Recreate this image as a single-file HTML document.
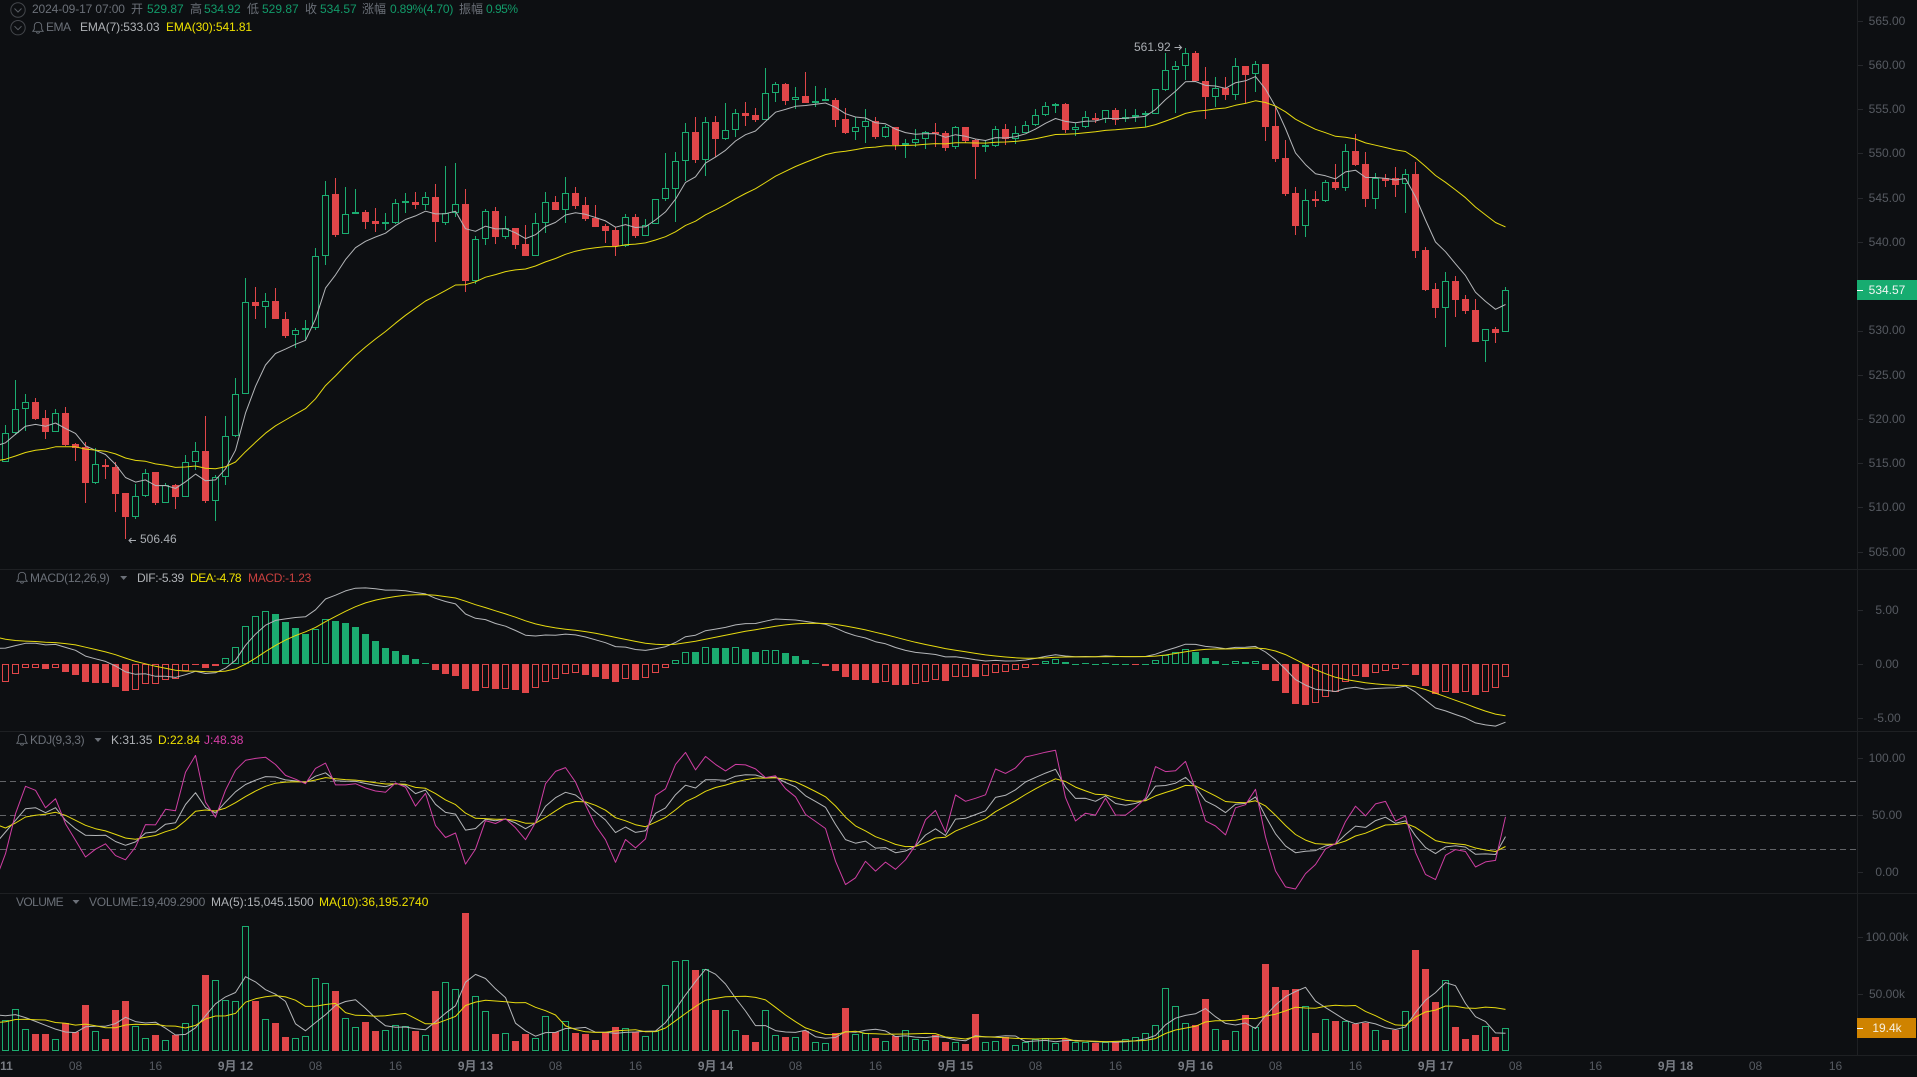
<!DOCTYPE html>
<html lang="zh"><head><meta charset="utf-8"><title>K-line chart</title>
<style>
html,body{margin:0;padding:0;background:#0d0f12;width:1917px;height:1077px;overflow:hidden}
body{position:relative;font:12px/14px "Liberation Sans","Noto Sans CJK SC",sans-serif;color:#6b7078}
svg{position:absolute;left:0;top:0}
span{position:absolute;white-space:nowrap}
.g{color:#129a69}.l{color:#6b7078}.w{color:#b0b3b7}.y{color:#eee000}.r{color:#c9403f}.p{color:#d63ea6}
.a{left:1857px;width:60px;text-align:center;color:#565a61}
.t{top:1059px;width:60px;margin-left:-30px;text-align:center;color:#565a61}
.b{font-weight:bold;color:#787c83}
</style></head><body>
<svg id="c" width="1917" height="1077" viewBox="0 0 1917 1077"></svg>

<span class="l" style="left:32px;top:2px;letter-spacing:-.12px">2024-09-17 07:00</span>
<span class="l" style="left:131px;top:2px">开</span><span class="g" style="left:147px;top:2px">529.87</span>
<span class="l" style="left:190px;top:2px">高</span><span class="g" style="left:204px;top:2px">534.92</span>
<span class="l" style="left:247px;top:2px">低</span><span class="g" style="left:262px;top:2px">529.87</span>
<span class="l" style="left:305px;top:2px">收</span><span class="g" style="left:320px;top:2px">534.57</span>
<span class="l" style="left:362px;top:2px">涨幅</span><span class="g" style="left:390px;top:2px;letter-spacing:-.2px">0.89%(4.70)</span>
<span class="l" style="left:459px;top:2px">振幅</span><span class="g" style="left:486px;top:2px;letter-spacing:-.5px">0.95%</span>

<span class="l" style="left:46px;top:20px;letter-spacing:-.5px">EMA</span>
<span class="w" style="left:80px;top:20px;letter-spacing:-.1px">EMA(7):533.03</span>
<span class="y" style="left:166px;top:20px;letter-spacing:-.1px">EMA(30):541.81</span>

<span class="l" style="left:30px;top:571px;letter-spacing:-.3px">MACD(12,26,9)</span>
<span class="w" style="left:137px;top:571px;letter-spacing:-.36px">DIF:-5.39</span>
<span class="y" style="left:190px;top:571px;letter-spacing:-.47px">DEA:-4.78</span>
<span class="r" style="left:248px;top:571px;letter-spacing:-.3px">MACD:-1.23</span>

<span class="l" style="left:30px;top:733px;letter-spacing:-.3px">KDJ(9,3,3)</span>
<span class="w" style="left:111px;top:733px">K:31.35</span>
<span class="y" style="left:158px;top:733px">D:22.84</span>
<span class="p" style="left:204px;top:733px">J:48.38</span>

<span class="l" style="left:16px;top:895px;letter-spacing:-.6px">VOLUME</span>
<span class="l" style="left:89px;top:895px;letter-spacing:-.26px">VOLUME:19,409.2900</span>
<span class="w" style="left:211px;top:895px">MA(5):15,045.1500</span>
<span class="y" style="left:319px;top:895px">MA(10):36,195.2740</span>

<span style="left:1134px;top:40px;color:#a9adb2">561.92</span>
<span style="left:140px;top:532px;color:#a9adb2">506.46</span>

<span class="a" style="top:14px">565.00</span><span class="a" style="top:58px">560.00</span><span class="a" style="top:102px">555.00</span><span class="a" style="top:146px">550.00</span><span class="a" style="top:191px">545.00</span><span class="a" style="top:235px">540.00</span><span class="a" style="top:323px">530.00</span><span class="a" style="top:368px">525.00</span><span class="a" style="top:412px">520.00</span><span class="a" style="top:456px">515.00</span><span class="a" style="top:500px">510.00</span><span class="a" style="top:545px">505.00</span>
<span class="a" style="top:603px">5.00</span><span class="a" style="top:657px">0.00</span><span class="a" style="top:711px">-5.00</span>
<span class="a" style="top:751px">100.00</span><span class="a" style="top:808px">50.00</span><span class="a" style="top:865px">0.00</span>
<span class="a" style="top:930px">100.00k</span><span class="a" style="top:987px">50.00k</span>

<div style="position:absolute;left:1857px;top:280px;width:60px;height:20px;background:#17ac70"></div>
<span class="a" style="top:283px;color:#f2f5f3">534.57</span>
<div style="position:absolute;left:1857px;top:1018px;width:59px;height:20px;background:#cf8300"></div>
<span class="a" style="top:1021px;color:#f6efe0">19.4k</span>
<div style="position:absolute;left:1857px;top:290px;width:6px;height:1px;background:#fff"></div>
<div style="position:absolute;left:1857px;top:1028px;width:6px;height:1px;background:#fff"></div>

<span class="t b" style="left:-4.5px">9月 11</span><span class="t" style="left:75.5px">08</span><span class="t" style="left:155.5px">16</span>
<span class="t b" style="left:235.5px">9月 12</span><span class="t" style="left:315.5px">08</span><span class="t" style="left:395.5px">16</span>
<span class="t b" style="left:475.5px">9月 13</span><span class="t" style="left:555.5px">08</span><span class="t" style="left:635.5px">16</span>
<span class="t b" style="left:715.5px">9月 14</span><span class="t" style="left:795.5px">08</span><span class="t" style="left:875.5px">16</span>
<span class="t b" style="left:955.5px">9月 15</span><span class="t" style="left:1035.5px">08</span><span class="t" style="left:1115.5px">16</span>
<span class="t b" style="left:1195.5px">9月 16</span><span class="t" style="left:1275.5px">08</span><span class="t" style="left:1355.5px">16</span>
<span class="t b" style="left:1435.5px">9月 17</span><span class="t" style="left:1515.5px">08</span><span class="t" style="left:1595.5px">16</span>
<span class="t b" style="left:1675.5px">9月 18</span><span class="t" style="left:1755.5px">08</span><span class="t" style="left:1835.5px">16</span>

<script>
var D="g425,433,462,462 g380,409,433,435 g394,402,409,431 r398,402,419,420 r410,418,432,439 g409,413,432,432 r407,413,445,446 r443,444,448,461 r442,447,483,503 g448,464,483,484 r459,465,467,479 r462,467,494,512 r493,493,517,539 g484,496,517,519 g469,473,496,497 r472,472,503,505 g483,485,503,503 r484,485,497,509 g455,462,497,497 g442,451,462,470 r416,451,501,503 g475,477,501,521 g416,436,477,485 g378,394,436,437 g278,302,394,394 r287,302,306,319 g293,301,307,328 r288,301,319,319 r312,319,336,338 g328,330,335,348 g320,328,330,340 g248,256,328,330 g181,195,256,265 r178,194,235,237 g187,214,234,234 g189,212,214,214 r210,212,222,229 r208,221,224,232 g213,222,224,230 g199,203,223,224 g193,201,203,213 r192,202,205,209 g192,197,205,210 r184,197,222,242 g166,213,223,225 g163,204,213,217 r189,204,281,292 g236,239,281,284 g209,211,239,245 r207,211,237,244 g216,228,237,239 r228,228,245,249 r225,244,256,256 g213,223,256,256 g192,202,223,233 r196,202,210,210 g177,193,210,223 r187,193,206,209 r197,205,219,221 r205,218,227,227 r224,226,231,243 r227,230,246,256 g214,217,246,247 r214,217,236,238 g219,225,236,236 g199,199,224,224 g153,188,199,201 g152,161,189,222 g123,132,161,181 r117,132,160,163 g117,122,160,176 r116,122,139,157 g103,130,139,140 g109,113,130,137 r102,113,116,126 r108,115,120,122 g68,93,120,120 g82,84,93,102 r83,84,101,105 g87,97,100,109 r72,96,103,103 g86,101,103,107 g88,99,101,101 r98,100,120,127 r108,119,133,134 g117,127,132,140 g109,121,127,143 r117,121,137,139 g125,127,137,138 r127,127,145,150 g139,143,145,158 g129,139,143,147 g131,132,139,149 r123,132,134,147 r131,133,148,151 g126,127,147,149 r127,127,141,143 r139,140,147,179 g140,145,147,152 g126,129,146,147 r124,129,139,145 g126,133,139,144 g121,125,133,133 g109,115,125,126 g102,106,115,116 g103,104,106,113 r103,104,130,133 g123,127,130,136 g111,117,127,128 r113,118,120,123 g110,110,119,123 r108,110,120,125 g109,117,119,122 g109,115,117,122 g111,113,115,127 g89,89,114,114 g53,70,90,91 g61,66,70,113 g48,53,66,80 r51,53,81,82 r67,81,97,119 g77,88,97,107 r77,88,95,100 g58,66,95,100 r66,66,75,103 g61,64,74,92 r64,64,127,141 r107,126,159,162 r140,158,194,196 r187,193,226,235 g189,200,226,237 r191,199,201,207 g180,182,201,202 r164,182,188,190 g144,151,188,191 r134,151,165,166 r152,164,199,207 g173,178,199,209 r174,178,181,187 r167,178,185,197 g169,174,184,213 r162,174,251,258 r247,250,290,291 r283,289,308,318 g272,281,308,347 r276,281,300,317 r295,299,311,314 r299,310,342,342 g329,329,341,362 r327,329,333,343 g287,290,332,332".split(" ").map(function(s){var a=s.slice(1).split(",").map(Number);return{g:s[0]=="g",h:a[0],t:a[1],b:a[2],l:a[3]}});
var V=[910,875,937,951,951,967,919,946,864,943,966,879,852,928,964,954,970,953,919,865,774,790,850,853,628,852,907,918,960,964,958,784,799,822,904,931,915,942,940,925,928,942,955,822,796,817,588,838,883,951,949,972,951,964,898,946,913,948,951,969,946,931,933,946,958,942,805,733,730,759,757,879,880,940,954,975,880,955,960,961,943,976,979,948,873,951,948,963,973,958,940,967,970,955,975,976,981,891,976,973,960,985,976,966,964,979,967,974,976,977,976,975,967,961,949,925,814,868,919,925,846,937,969,943,894,931,741,810,819,816,868,948,907,912,913,921,917,940,969,940,883,699,756,855,790,930,966,954,928,960,934];
var GR="#1bac70",RD="#e04649",WH="#b4b6b9",YE="#e6da10",PK="#cf3ea3",s="";
function X(i){return 5.5+10*i}
function line(a,col,w){var p=[];for(var i=0;i<a.length;i++)p.push(X(i-1)+","+a[i].toFixed(1));return '<polyline fill="none" stroke="'+col+'" stroke-width="'+(w||1)+'" stroke-linejoin="round" points="'+p.join(" ")+'"/>'}
function bar(x,t,b,col,hollow){var h=Math.max(b-t,1);if(hollow&&h>2)return '<rect x="'+(x-3)+'" y="'+(t+.5)+'" width="6" height="'+(h-1)+'" fill="none" stroke="'+col+'"/>';return '<rect x="'+(x-3.5)+'" y="'+t+'" width="7" height="'+h+'" fill="'+col+'"/>'}
// grid
["569.5","731.5","893.5","1055.5"].forEach(function(y){s+='<line x1="0" x2="1917" y1="'+y+'" y2="'+y+'" stroke="#1e2023"/>'});
s+='<line x1="1857.5" x2="1857.5" y1="0" y2="1055" stroke="#1e2023"/>';
[21,65,109,153,198,242,331,375,419,463,507,552,610,664,718,758,815,872,937,994].forEach(function(y){s+='<line x1="1858" x2="1863" y1="'+(y+.5)+'" y2="'+(y+.5)+'" stroke="#26282c"/>'});
[781.5,815.5,849.5].forEach(function(y){s+='<line x1="0" x2="1857" y1="'+y+'" y2="'+y+'" stroke="#626468" stroke-dasharray="6 4"/>'});
// candles
var close=[];
D.forEach(function(d,i){var x=X(i),c=d.g?GR:RD;close.push(d.g?d.t:d.b);
 if(d.h<d.t)s+='<line x1="'+x+'" x2="'+x+'" y1="'+d.h+'" y2="'+d.t+'" stroke="'+c+'"/>';
 if(d.l>d.b)s+='<line x1="'+x+'" x2="'+x+'" y1="'+d.b+'" y2="'+d.l+'" stroke="'+c+'"/>';
 s+=bar(x,d.t,d.b,c,d.g)});
// EMA
function ema(st,n){var a=[st],v=st,k=2/(n+1);close.forEach(function(c){v+=(c-v)*k;a.push(v)});return a}
s+=line(ema(446,7),WH)+line(ema(461,30),YE);
// MACD
var e12=ema(448.2,12),e26=ema(461,26),dif=[],dea=[],dv=2.5,k9=.2;
for(var i=0;i<e12.length;i++){var f=(e26[i]-e12[i])/8.85;dif.push(f);if(i>0)dv+=(f-dv)*k9;dea.push(dv)}
var prev=2*(dif[0]-dea[0]);
for(i=1;i<dif.length;i++){var m=2*(dif[i]-dea[i]),px=m*10.8,z=664;
 var t=m>=0?z-px:z,b=m>=0?z:z-px;
 s+=bar(X(i-1),Math.round(t),Math.round(b),m>=0?GR:RD,m>prev);prev=m}
function my(a){return a.map(function(v){return 664-v*10.8})}
s+=line(my(dif),WH)+line(my(dea),YE);
// KDJ: first points read directly, then computed from the 9-period window
function zy(z){return 717+z/3}
function ky(v){return 758.6+(100-v)*1.133}
function yv(y){return 100-(y-758.6)/1.133}
var kA=[380,345,310,275,272,287,272,310,335,355].map(zy),dA=[322,333,318,300,295,292,286,295,310,325].map(zy),jA=[490,410,290,208,220,272,245,320,370,420].map(zy);
var K=yv(kA[9]),Dd=yv(dA[9]);
for(i=9;i<D.length;i++){var hi=1e9,lo=-1e9;
 for(var j=i-8;j<=i;j++){hi=Math.min(hi,D[j].h);lo=Math.max(lo,D[j].l)}
 var rsv=lo==hi?50:(lo-close[i])/(lo-hi)*100;
 K=(2*K+rsv)/3;Dd=(2*Dd+K)/3;kA.push(ky(K));dA.push(ky(Dd));jA.push(ky(3*K-2*Dd))}
s+=line(kA,WH)+line(dA,YE)+line(jA,PK);
// Volume
var H=[20,20,20,20,20,36,36,36,36,36].concat(V.map(function(v){return (1001-v)/3}));
V.forEach(function(v,i){var t=Math.round(717+v/3);s+=bar(X(i),t,1051,D[i].g?GR:RD,D[i].g)});
function ma(n){var a=[];for(var i=9;i<H.length;i++){var q=0;for(var j=0;j<n;j++)q+=H[i-j];a.push(1050.7-q/n)}return a}
s+=line(ma(5),WH)+line(ma(10),YE);
// icons
function chev(x,y){return '<circle cx="'+x+'" cy="'+y+'" r="7.2" fill="none" stroke="#44474c"/><path d="M'+(x-3.5)+' '+(y-1.5)+'L'+x+' '+(y+2)+'L'+(x+3.5)+' '+(y-1.5)+'" fill="none" stroke="#5a5e64"/>'}
function bell(x,y){return '<path transform="translate('+x+' '+y+')" d="M6 .8C3.6.8 2.3 2.6 2.3 4.8V7.6L.8 9.8H11.2L9.7 7.6V4.8C9.7 2.6 8.4.8 6 .8ZM4.4 10.6C4.8 12 7.2 12 7.6 10.6" fill="none" stroke="#6b7078" stroke-width=".9"/>'}
function car(x,y){return '<path d="M'+(x-3.5)+' '+(y-2)+'h7l-3.5 4z" fill="#6b7078"/>'}
function arrow(x,y,d){return '<path d="M'+x+' '+y+'h'+(7*d)+'M'+(x+7*d-2.5*d)+' '+(y-2.5)+'l'+(2.5*d)+' 2.5l'+(-2.5*d)+' 2.5" fill="none" stroke="#a9adb2"/>'}
s+=chev(18,10)+chev(18,27.7)+bell(32,21.5)+bell(16,571.5)+bell(16,733.5)+car(123.7,578)+car(98,740)+car(76,902);
s+=arrow(1174.5,47.5,1)+arrow(136,540.5,-1);
document.getElementById("c").innerHTML=s;
</script>
</body></html>
